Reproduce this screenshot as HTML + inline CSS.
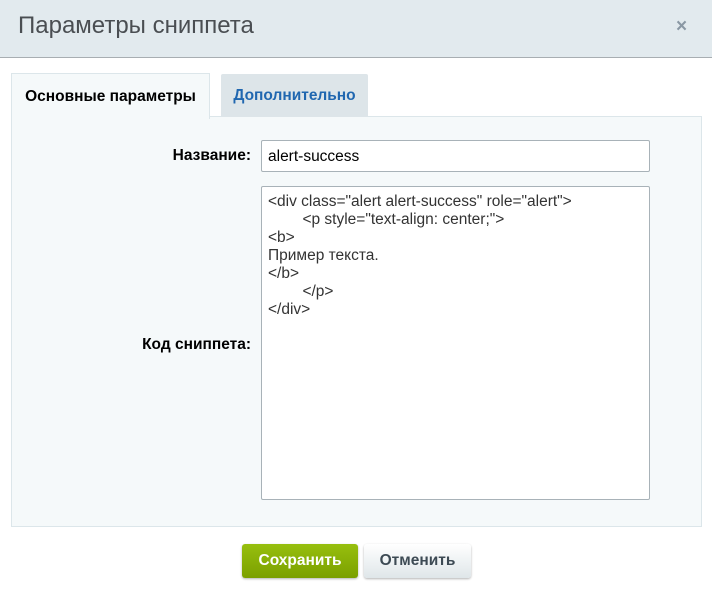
<!DOCTYPE html>
<html><head><meta charset="utf-8"><style>
body{margin:0;width:712px;height:591px;background:#fff;font-family:"Liberation Sans",Arial,sans-serif;position:relative;overflow:hidden}
.hdr{position:absolute;left:0;top:0;width:712px;height:57px;background:#e2eaee;border-bottom:1px solid #a8aeb2}
.hdr .t{position:absolute;left:18px;top:12px;font-size:24px;color:#4a4e52}
.hdr .x{position:absolute;left:676px;top:16px;font-size:19px;color:#8a98a4;font-weight:bold}
.tab1{position:absolute;left:11px;top:73px;width:197px;height:45px;background:#f5f9fa;border:1px solid #dce6ea;border-bottom:none;font-size:15.5px;font-weight:bold;color:#000;line-height:46px;text-align:center;z-index:2}
.tab2{position:absolute;left:221px;top:74px;width:147px;height:43px;background:#dde5e9;font-size:15.5px;font-weight:bold;color:#2067b0;line-height:44px;text-align:center;border-radius:2px 2px 0 0}
.panel{position:absolute;left:11px;top:116px;width:689px;height:409px;background:#f5f9fa;border:1px solid #dce6ea}
.lbl{position:absolute;font-size:15.5px;font-weight:bold;color:#000;text-align:right;width:240px;left:11px}
.inp{position:absolute;left:261px;top:140px;background:#fff;border:1px solid #a8b2b8;border-radius:2px;font-size:15.5px;line-height:31px;padding-left:6px;box-sizing:border-box;width:389px;height:32px}
.ta{position:absolute;left:261px;top:186px;width:389px;height:314px;box-sizing:border-box;background:#fff;border:1px solid #a8b2b8;border-radius:2px;font-size:15.5px;line-height:18px;padding:6px 6px;color:#333;white-space:pre;tab-size:8}
.b1{position:absolute;left:242px;top:544px;width:116px;height:34px;border-radius:3px;background:linear-gradient(#97bf0e,#7ba000);box-shadow:0 1px 2px rgba(0,0,0,.3);color:#fff;font-weight:bold;font-size:15.5px;text-align:center;line-height:33px}
.b2{position:absolute;left:364px;top:544px;width:107px;height:34px;border-radius:3px;background:linear-gradient(#fff,#dfe6e9);box-shadow:0 1px 2px rgba(0,0,0,.3);color:#3d4a54;font-weight:bold;font-size:15.5px;text-align:center;line-height:33px}
</style></head><body>
<div class="hdr"><div class="t">Параметры сниппета</div><div class="x">×</div></div>
<div class="panel"></div>
<div class="tab1">Основные параметры</div>
<div class="tab2">Дополнительно</div>
<div class="lbl" style="top:147px">Название:</div>
<div class="inp">alert-success</div>
<div class="lbl" style="top:336px">Код сниппета:</div>
<div class="ta">&lt;div class="alert alert-success" role="alert"&gt;
	&lt;p style="text-align: center;"&gt;
&lt;b&gt;
Пример текста.
&lt;/b&gt;
	&lt;/p&gt;
&lt;/div&gt;</div>
<div class="b1">Сохранить</div>
<div class="b2">Отменить</div>
</body></html>
